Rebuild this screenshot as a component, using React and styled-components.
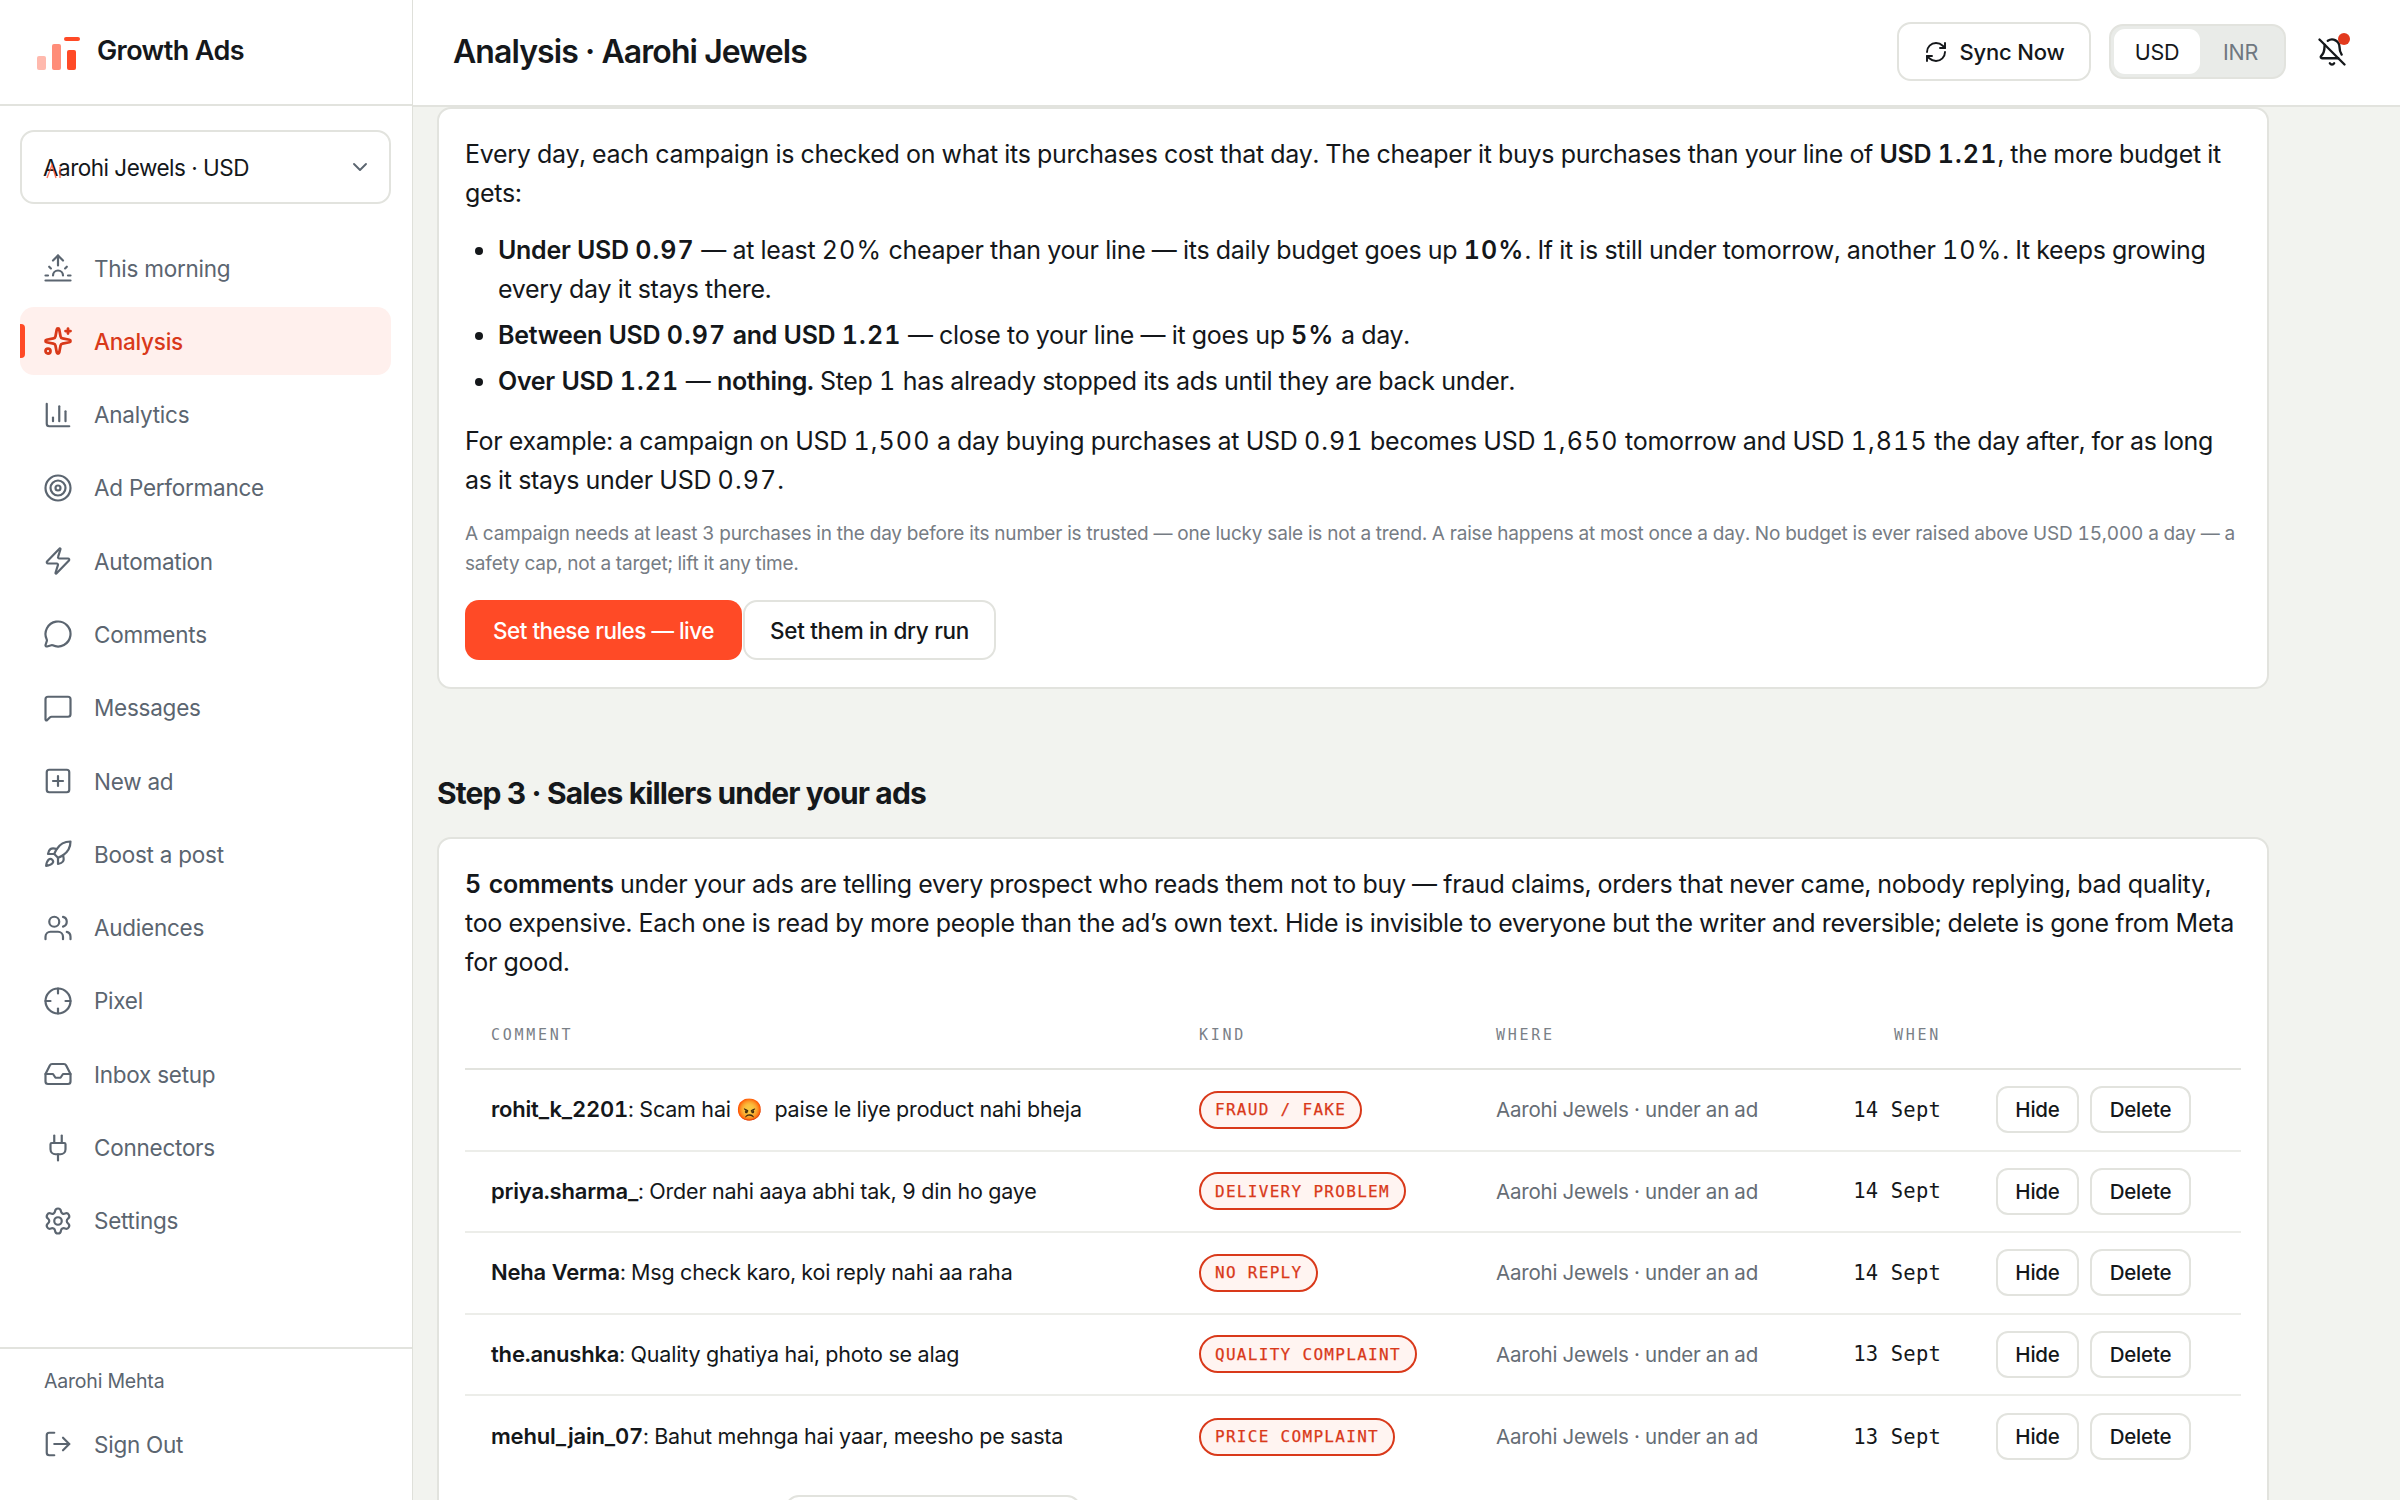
import React from 'react';
import styled, { createGlobalStyle } from 'styled-components';
import {
  Sunrise, Sparkles, ChartColumn, Target, Zap, MessageCircle, MessageSquare, SquarePlus, Rocket,
  Users, Crosshair, Inbox, Plug, Settings, LogOut, RefreshCw, BellOff, ChevronDown,
} from 'lucide-react';

const sans = `Inter, "Liberation Sans", sans-serif`;
const mono = `"DejaVu Sans Mono", "Liberation Mono", monospace`;

const Global = createGlobalStyle`
  html, body { margin: 0; padding: 0; height: 100%; overflow: hidden; }
  body { font-family: ${sans}; color: #14171a; background: #f2f3ef; }
  * { box-sizing: border-box; }
`;

const Shell = styled.div`
  display: flex;
  width: 2400px;
  height: 1500px;
  overflow: hidden;
`;

const Sidebar = styled.aside`
  width: 413px;
  flex: none;
  background: #fff;
  border-right: 1px solid #dfe0da;
  display: flex;
  flex-direction: column;
`;

const Brand = styled.div`
  height: 106px;
  flex: none;
  border-bottom: 2px solid #e2e3de;
  display: flex;
  align-items: flex-start;
  gap: 16px;
  padding: 37px 0 0 36px;
`;

const BrandName = styled.div`
  font-size: 27px;
  font-weight: 600;
  letter-spacing: -0.6px;
  line-height: 28px;
  color: #15181b;
`;

const SelectBox = styled.div`
  position: relative;
  margin: 24px 21px 0 20px;
  height: 74px;
  border: 2px solid #e2e3de;
  border-radius: 14px;
  display: flex;
  align-items: center;
  justify-content: space-between;
  padding: 0 17px 0 21px;
  font-size: 22.5px;
  letter-spacing: -0.5px;
  color: #14171a;
`;

const StrayMark = styled.svg`
  position: absolute;
  left: 23px;
  top: 31px;
  pointer-events: none;
`;

const Nav = styled.nav`
  display: flex;
  flex-direction: column;
  gap: 5.3px;
  margin: 30px 21px 0 20px;
  flex: 1;
`;

const NavRow = styled.div`
  position: relative;
  height: 68px;
  flex: none;
  display: flex;
  align-items: center;
  gap: 21px;
  padding-left: 23px;
  border-radius: 14px;
  font-size: 22.5px;
  letter-spacing: -0.25px;
  color: ${(p) => (p.$active ? '#d9391a' : '#5b6570')};
  background: ${(p) => (p.$active ? '#fff0ed' : 'transparent')};
  font-weight: ${(p) => (p.$active ? 500 : 400)};
`;

const ActiveMark = styled.span`
  position: absolute;
  left: 0;
  top: 17px;
  width: 5px;
  height: 34px;
  border-radius: 0 4px 4px 0;
  background: #ff4a26;
`;

const Footer = styled.div`
  height: 153px;
  flex: none;
  border-top: 2px solid #e2e3de;
  padding: 18px 21px 0 20px;
`;

const UserName = styled.div`
  padding-left: 24px;
  font-size: 19.5px;
  line-height: 28px;
  letter-spacing: -0.2px;
  color: #5b6570;
`;

const SignOut = styled(NavRow)`
  margin-top: 15px;
`;

const Main = styled.main`
  flex: 1;
  min-width: 0;
  display: flex;
  flex-direction: column;
  height: 1500px;
`;

const Header = styled.header`
  height: 107px;
  flex: none;
  background: #fff;
  border-bottom: 2px solid #e2e3de;
  display: flex;
  align-items: center;
  justify-content: space-between;
  padding: 0 53px 2px 40px;
`;

const PageTitle = styled.h1`
  margin: 0;
  font-size: 32px;
  font-weight: 600;
  letter-spacing: -0.92px;
  color: #15181b;
`;

const Tools = styled.div`
  display: flex;
  align-items: center;
`;

const SyncButton = styled.button`
  width: 194px;
  height: 59px;
  background: #fff;
  border: 2px solid #e2e3de;
  border-radius: 14px;
  display: flex;
  align-items: center;
  justify-content: center;
  gap: 12px;
  font: 500 22px ${sans};
  letter-spacing: -0.2px;
  color: #14171a;
  padding: 0;
`;

const Toggle = styled.div`
  margin-left: 18px;
  width: 177px;
  height: 55px;
  background: #e9ebe8;
  border: 2px solid #e2e3de;
  border-radius: 14px;
  display: flex;
  padding: 3px;
`;

const ToggleOption = styled.div`
  flex: ${(p) => (p.$on ? '0 0 86px' : '1')};
  border-radius: 11px;
  height: 45px;
  display: flex;
  align-items: center;
  justify-content: center;
  font-size: 21.5px;
  letter-spacing: -0.2px;
  background: ${(p) => (p.$on ? '#fff' : 'transparent')};
  color: ${(p) => (p.$on ? '#14171a' : '#6f7780')};
`;

const BellWrap = styled.div`
  position: relative;
  margin-left: 31px;
  width: 30px;
  height: 30px;
  display: flex;
`;

const BellDot = styled.span`
  position: absolute;
  top: -4px;
  right: -3px;
  width: 12px;
  height: 12px;
  border-radius: 50%;
  background: #e23a1e;
`;

const Content = styled.div`
  flex: 1;
  min-height: 0;
  overflow: hidden;
  padding-left: 24px;
`;

const Card = styled.section`
  width: 1832px;
  background: #fff;
  border: 2px solid #e2e3de;
  border-radius: 14px;
  padding: 26px 26px 26px;
  font-size: 25px;
  line-height: 39px;
  letter-spacing: -0.29px;
  font-variant-numeric: tabular-nums;
  color: #14171a;
`;

const Para = styled.p`
  margin: ${(p) => p.$mt || 0}px 0 0;
`;

const Num = styled.span`
  letter-spacing: 1.1px;
`;

const Bullets = styled.ul`
  list-style: disc;
  margin: 18px 0 0;
  padding: 0 0 0 33px;
  display: flex;
  flex-direction: column;
  gap: 7px;
`;

const Strong = styled.strong`
  font-weight: 600;
`;

const Note = styled.p`
  margin: 19px 0 0;
  font-size: 19px;
  line-height: 30px;
  letter-spacing: -0.17px;
  color: #767c84;
`;

const Actions = styled.div`
  display: flex;
  margin: 21px 0 1px;
`;

const Primary = styled.button`
  width: 277px;
  height: 60px;
  border: 0;
  border-radius: 14px;
  background: #ff4a26;
  color: #fff;
  font: 500 22.5px ${sans};
  letter-spacing: -0.5px;
`;

const Secondary = styled.button`
  width: 253px;
  height: 60px;
  margin-left: 1px;
  border: 2px solid #e2e3de;
  border-radius: 14px;
  background: #fff;
  color: #14171a;
  font: 500 22.5px ${sans};
  letter-spacing: -0.3px;
`;

const SectionTitle = styled.h2`
  margin: 86px 0 26px;
  font-size: 30px;
  line-height: 36px;
  font-weight: 700;
  letter-spacing: -0.87px;
  color: #15181b;
`;

const TableGrid = styled.div`
  margin-top: 20px;
  display: grid;
  grid-template-columns: 734px 297px 359px 86px 1fr;
`;

const HeadRow = styled.div`
  display: contents;
`;

const HeadCell = styled.div`
  height: 68px;
  border-bottom: 2px solid #e2e3de;
  padding-left: ${(p) => p.$pad ?? 0}px;
  display: flex;
  align-items: center;
  justify-content: ${(p) => (p.$right ? 'flex-end' : 'flex-start')};
  font: 400 15px ${mono};
  letter-spacing: 2.7px;
  color: #7a8087;
`;

const Cell = styled.div`
  height: 81.5px;
  border-bottom: ${(p) => (p.$last ? '0' : '2px solid #ecede9')};
  padding-left: ${(p) => p.$pad ?? 0}px;
  display: flex;
  align-items: center;
  justify-content: ${(p) => (p.$right ? 'flex-end' : 'flex-start')};
  gap: ${(p) => p.$gap ?? 0}px;
  font-size: 21.5px;
  letter-spacing: -0.18px;
`;

const CommentText = styled.span`
  white-space: pre;
  color: #14171a;
`;

const Author = styled.strong`
  font-size: 22px;
  font-weight: 600;
  letter-spacing: -0.2px;
`;

const Where = styled.span`
  font-size: 20.5px;
  letter-spacing: -0.2px;
  color: #666d75;
`;

const When = styled.span`
  font: 400 20.5px ${mono};
  letter-spacing: 0.2px;
  white-space: nowrap;
  color: #14171a;
`;

const Badge = styled.span`
  height: 38px;
  padding: 0 14px;
  border: 2px solid #d9391a;
  border-radius: 19px;
  background: #fff4f1;
  display: inline-flex;
  align-items: center;
  font: 500 16px ${mono};
  letter-spacing: 1.3px;
  -webkit-text-stroke: 0.25px #d9391a;
  color: #d9391a;
`;

const SmallButton = styled.button`
  width: ${(p) => p.$w}px;
  height: 47px;
  background: #fff;
  border: 2px solid #e2e3de;
  border-radius: 12px;
  font: 500 20.5px ${sans};
  letter-spacing: -0.2px;
  color: #14171a;
  padding: 0;
`;

const LowerButton = styled.div`
  width: 296px;
  height: 60px;
  margin: 17px 0 0 320px;
  background: #fff;
  border: 2px solid #e2e3de;
  border-radius: 14px;
`;

const LogoSvg = () => (
  <svg width="45" height="36" viewBox="0 0 45 36" style={{ flex: 'none' }}>
    <rect x="1" y="19" width="9" height="14" rx="2" fill="#ffb9ad" />
    <rect x="16" y="7" width="9" height="26" rx="2" fill="#ff8d79" />
    <rect x="31" y="13" width="9" height="20" rx="2" fill="#ff4a26" />
    <rect x="28" y="0" width="16" height="4" rx="2" fill="#ff4a26" />
  </svg>
);

const navItems = [
  ['This morning', Sunrise], ['Analysis', Sparkles, true], ['Analytics', ChartColumn],
  ['Ad Performance', Target], ['Automation', Zap], ['Comments', MessageCircle],
  ['Messages', MessageSquare], ['New ad', SquarePlus], ['Boost a post', Rocket],
  ['Audiences', Users], ['Pixel', Crosshair], ['Inbox setup', Inbox],
  ['Connectors', Plug], ['Settings', Settings],
];

const rows = [
  ['rohit_k_2201', ': Scam hai 😡  paise le liye product nahi bheja', 'FRAUD / FAKE', '14 Sept'],
  ['priya.sharma_', ': Order nahi aaya abhi tak, 9 din ho gaye', 'DELIVERY PROBLEM', '14 Sept'],
  ['Neha Verma', ': Msg check karo, koi reply nahi aa raha', 'NO REPLY', '14 Sept'],
  ['the.anushka', ': Quality ghatiya hai, photo se alag', 'QUALITY COMPLAINT', '13 Sept'],
  ['mehul_jain_07', ': Bahut mehnga hai yaar, meesho pe sasta', 'PRICE COMPLAINT', '13 Sept'],
];

export default function App() {
  return (
    <Shell>
      <Global />
      <Sidebar>
        <Brand><LogoSvg /><BrandName>Growth Ads</BrandName></Brand>
        <SelectBox>
          <StrayMark width="18" height="16" viewBox="0 0 18 16" fill="none" stroke="#ff4a26" strokeWidth="1.4" opacity="0.75">
            <path d="M2 15 L7 2 L11 15" />
            <path d="M15 4 L15 15" />
          </StrayMark>
          Aarohi Jewels · USD
          <ChevronDown size={24} color="#5b6570" strokeWidth={1.9} />
        </SelectBox>
        <Nav>
          {navItems.map(([label, Icon, active]) => (
            <NavRow key={label} $active={active}>
              {active && <ActiveMark />}
              <Icon size={30} strokeWidth={active ? 2.2 : 1.75} />
              {label}
            </NavRow>
          ))}
        </Nav>
        <Footer>
          <UserName>Aarohi Mehta</UserName>
          <SignOut><LogOut size={30} strokeWidth={1.75} />Sign Out</SignOut>
        </Footer>
      </Sidebar>
      <Main>
        <Header>
          <PageTitle>Analysis · Aarohi Jewels</PageTitle>
          <Tools>
            <SyncButton><RefreshCw size={24} strokeWidth={1.9} />Sync Now</SyncButton>
            <Toggle>
              <ToggleOption $on>USD</ToggleOption>
              <ToggleOption>INR</ToggleOption>
            </Toggle>
            <BellWrap><BellOff size={30} strokeWidth={1.9} /><BellDot /></BellWrap>
          </Tools>
        </Header>
        <Content>
          <Card>
            <Para>Every day, each campaign is checked on what its purchases cost that day. The cheaper it buys purchases than your line of <Strong>USD <Num>1.21</Num></Strong>, the more budget it gets:</Para>
            <Bullets>
              <li><Strong>Under USD <Num>0.97</Num></Strong> — at least <Num>20%</Num> cheaper than your line — its daily budget goes up <Strong><Num>10%</Num></Strong>. If it is still under tomorrow, another <Num>10%</Num>. It keeps growing every day it stays there.</li>
              <li><Strong>Between USD <Num>0.97</Num> and USD <Num>1.21</Num></Strong> — close to your line — it goes up <Strong><Num>5%</Num></Strong> a day.</li>
              <li><Strong>Over USD <Num>1.21</Num></Strong> — <Strong>nothing.</Strong> Step <Num>1</Num> has already stopped its ads until they are back under.</li>
            </Bullets>
            <Para $mt={21}>For example: a campaign on USD <Num>1,500</Num> a day buying purchases at USD <Num>0.91</Num> becomes USD <Num>1,650</Num> tomorrow and USD <Num>1,815</Num> the day after, for as long as it stays under USD <Num>0.97</Num>.</Para>
            <Note>A campaign needs at least 3 purchases in the day before its number is trusted — one lucky sale is not a trend. A raise happens at most once a day. No budget is ever raised above USD 15,000 a day — a safety cap, not a target; lift it any time.</Note>
            <Actions>
              <Primary>Set these rules — live</Primary>
              <Secondary>Set them in dry run</Secondary>
            </Actions>
          </Card>
          <SectionTitle>Step 3 · Sales killers under your ads</SectionTitle>
          <Card>
            <Para><Strong><Num>5</Num> comments</Strong> under your ads are telling every prospect who reads them not to buy — fraud claims, orders that never came, nobody replying, bad quality, too expensive. Each one is read by more people than the ad’s own text. Hide is invisible to everyone but the writer and reversible; delete is gone from Meta for good.</Para>
            <TableGrid>
              <HeadRow>
                <HeadCell $pad={26}>COMMENT</HeadCell>
                <HeadCell>KIND</HeadCell>
                <HeadCell>WHERE</HeadCell>
                <HeadCell $right>WHEN</HeadCell>
                <HeadCell />
              </HeadRow>
              {rows.map(([who, text, kind, when], i) => {
                const last = i === rows.length - 1;
                return (
                  <React.Fragment key={who}>
                    <Cell $pad={26} $last={last}><CommentText><Author>{who}</Author>{text}</CommentText></Cell>
                    <Cell $last={last}><Badge>{kind}</Badge></Cell>
                    <Cell $last={last}><Where>Aarohi Jewels · under an ad</Where></Cell>
                    <Cell $right $last={last}><When>{when}</When></Cell>
                    <Cell $pad={55} $gap={11} $last={last}>
                      <SmallButton $w={83}>Hide</SmallButton>
                      <SmallButton $w={101}>Delete</SmallButton>
                    </Cell>
                  </React.Fragment>
                );
              })}
            </TableGrid>
            <LowerButton />
          </Card>
        </Content>
      </Main>
    </Shell>
  );
}
